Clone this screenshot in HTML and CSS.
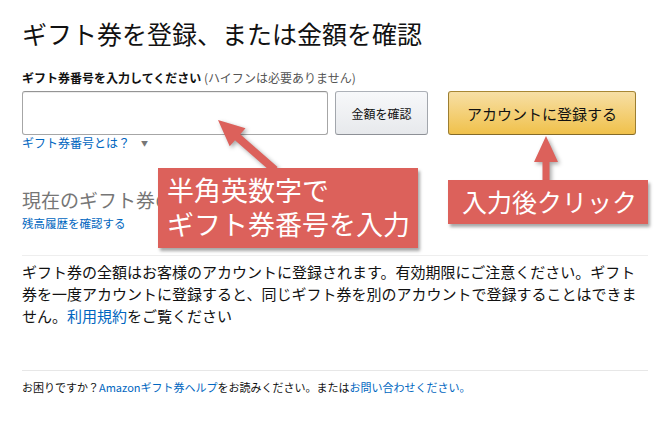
FILE: index.html
```html
<!DOCTYPE html>
<html lang="ja">
<head>
    <meta charset="utf-8">
    <title>ギフト券を登録</title>
    <link rel="stylesheet" href="styles.css">
</head>
<body>
    <main class="page">
        <h1 class="title">ギフト券を登録、または金額を確認</h1>
        <form class="redeem">
            <label class="field-label" for="claim-code"><b>ギフト券番号を入力してください</b> <span class="hint">(ハイフンは必要ありません)</span></label>
            <div class="redeem-row">
                <div class="claim-col">
                    <input class="claim-input" id="claim-code" type="text">
                    <div class="what-row">
                        <a class="link" href="#">ギフト券番号とは？</a><span class="caret">&#9660;</span>
                    </div>
                </div>
                <button class="btn btn-check" type="button">金額を確認</button>
                <button class="btn btn-primary" type="button">アカウントに登録する</button>
            </div>
        </form>
        <section class="balance">
            <h2 class="balance-title">現在のギフト券の残高</h2>
            <a class="link history" href="#">残高履歴を確認する</a>
        </section>
        <p class="notice">ギフト券の全額はお客様のアカウントに登録されます。有効期限にご注意ください。ギフト券を一度アカウントに登録すると、同じギフト券を別のアカウントで登録することはできません。<a class="link" href="#">利用規約</a>をご覧ください</p>
        <footer class="help">
            お困りですか？<a class="link" href="#">Amazonギフト券ヘルプ</a>をお読みください。または<a class="link" href="#">お問い合わせください。</a>
        </footer>

        <!-- annotation overlay -->
        <svg class="arrows" width="670" height="432" viewBox="0 0 670 432">
            <polygon points="218,120 245.5,128.2 240.2,134.2 277.6,167 272.4,173 235,140.2 229.7,146.2"/>
            <polygon points="546,136 558,162 549.5,162 549.5,182 542.5,182 542.5,162 534,162"/>
        </svg>
        <div class="callout callout-code">半角英数字で<br>ギフト券番号を入力</div>
        <div class="callout callout-click">入力後クリック</div>
    </main>
</body>
</html>
```

FILE: styles.css
```css
* { padding: 0; margin: 0; box-sizing: border-box; }
html { background-color: #fff; }
body {
    font-family: "Noto Sans CJK JP", "Noto Sans", sans-serif;
    color: #111;
}
.page {
    position: relative;
    width: 670px;
    height: 432px;
    padding: 18px 22px 0;
    overflow: hidden;
}
.link { color: #0066c0; text-decoration: none; }
.title {
    font-size: 25px;
    font-weight: normal;
    line-height: 30px;
    margin-bottom: 22px;
}
.field-label {
    display: block;
    font-size: 12px;
    line-height: 16px;
    margin-bottom: 5px;
}
.field-label b { font-weight: bold; }
.hint { color: #555; }
.redeem-row {
    display: flex;
    align-items: flex-start;
}
.claim-col { width: 306px; }
.claim-input {
    display: block;
    width: 306px;
    height: 44px;
    border: 1px solid #a6a6a6;
    border-top-color: #949494;
    border-radius: 3px;
    box-shadow: 0 1px 0 rgba(0, 0, 0, 0.07) inset;
    outline: none;
}
.what-row {
    font-size: 12px;
    line-height: 16px;
}
.caret {
    font-size: 7px;
    color: #777;
    margin-left: 11px;
    vertical-align: 2px;
}
.btn {
    height: 44px;
    border-radius: 3px;
    border: 1px solid;
    font-family: inherit;
    color: #111;
}
.btn-check {
    width: 93px;
    margin-left: 7px;
    font-size: 12px;
    background: linear-gradient(#f7f8fa, #e7e9ec);
    border-color: #adb1b8 #a2a6ac #8d9096;
}
.btn-primary {
    width: 188px;
    margin-left: 20px;
    font-size: 15px;
    background: linear-gradient(#f7dfa5, #f0c14b);
    border-color: #a88734 #9c7e31 #846a29;
}
.balance {
    margin-top: 37px;
    padding-bottom: 24px;
    border-bottom: 1px solid #eee;
}
.balance-title {
    font-size: 19px;
    font-weight: normal;
    line-height: 24px;
    color: #767676;
}
.history {
    display: block;
    font-size: 11.5px;
    line-height: 16px;
    margin-top: 3px;
}
.notice {
    font-size: 15px;
    line-height: 22px;
    margin-top: 5px;
}
.help {
    margin-top: 43px;
    padding-top: 8px;
    border-top: 1px solid #e7e7e7;
    font-size: 11px;
    line-height: 16px;
}
.arrows {
    position: absolute;
    left: 0;
    top: 0;
    pointer-events: none;
    fill: #dc615b;
    filter: drop-shadow(2px 2px 2px rgba(0, 0, 0, 0.35));
}
.callout {
    position: absolute;
    background-color: #dc615b;
    color: #fff;
    box-shadow: 2px 3px 3px rgba(0, 0, 0, 0.35);
}
.callout-code {
    left: 158px;
    top: 168px;
    width: 260px;
    height: 80px;
    padding: 5px 0 0 9px;
    font-size: 27px;
    line-height: 34px;
}
.callout-click {
    left: 448px;
    top: 180px;
    width: 200px;
    height: 44px;
    padding: 3px 0 0 14px;
    font-size: 25px;
    line-height: 36px;
}
```
